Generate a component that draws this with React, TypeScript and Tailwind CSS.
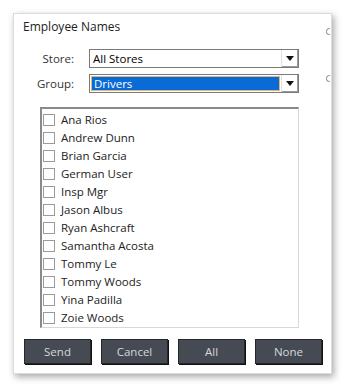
import React from "react";

const names = [
  "Ana Rios",
  "Andrew Dunn",
  "Brian Garcia",
  "German User",
  "Insp Mgr",
  "Jason Albus",
  "Ryan Ashcraft",
  "Samantha Acosta",
  "Tommy Le",
  "Tommy Woods",
  "Yina Padilla",
  "Zoie Woods",
];

function Arrow() {
  return (
    <div className="w-[17px] h-full flex items-center justify-center bg-white border-l border-[#e0e0e0] shadow-[inset_-1px_-1px_0_#9a9a9a]">
      <svg width="8" height="5" viewBox="0 0 8 5">
        <path d="M0 0 H8 L4 5 Z" fill="#111" />
      </svg>
    </div>
  );
}

export default function App() {
  return (
    <div
      className="w-[345px] h-[387px] bg-white relative overflow-hidden"
      style={{ fontFamily: '"Open Sans", "Noto Sans", sans-serif' }}
    >
      <div className="absolute left-[13px] top-[290px] w-[1px] h-[5px] bg-[#8a8a8a]" />
      <div className="ml-[13px] mt-[13px] w-[319px] h-[361px] bg-white border border-[#dcdcdc] shadow-[2px_3px_7px_rgba(0,0,0,0.35)] relative flex flex-col">
        <span className="absolute right-[1px] top-[14px] w-[4px] h-[7px] border border-r-0 border-[#9a9a9a] rounded-l-full" />
        <span className="absolute right-[1px] top-[61px] w-[4px] h-[7px] border border-r-0 border-[#9a9a9a] rounded-l-full" />
        <div className="pl-[9px] pt-[5px] text-[12px] leading-[16px] text-[#222]">
          Employee Names
        </div>
        <div className="mt-[14px] flex items-center h-[19px]">
          <div className="w-[60px] text-right text-[11.5px] text-[#333]">Store:</div>
          <div className="ml-[15px] w-[210px] h-[19px] border border-[#7a7a7a] flex items-stretch">
            <div className="flex-1 pl-[3px] text-[11.5px] leading-[17px] text-black">All Stores</div>
            <Arrow />
          </div>
        </div>
        <div className="mt-[6px] flex items-center h-[19px]">
          <div className="w-[60px] text-right text-[11.5px] text-[#333]">Group:</div>
          <div className="ml-[15px] w-[210px] h-[19px] border border-[#7a7a7a] flex items-stretch">
            <div className="flex-1 p-[1px]">
              <div className="h-full bg-[#0a6ad8] border border-[#e8b86a] pl-[2px] text-[11.5px] leading-[14px] text-white">
                Drivers
              </div>
            </div>
            <Arrow />
          </div>
        </div>
        <div className="mt-[14px] ml-[26px] w-[259px] h-[221px] border-t-2 border-l-2 border-t-[#8a8a8a] border-l-[#8a8a8a] border-r border-b border-r-[#d8d8d8] border-b-[#d8d8d8] pt-[2px]">
          {names.map((n) => (
            <div key={n} className="h-[18px] flex items-center">
              <div className="ml-[1px] w-[12px] h-[12px] border border-[#9a9a9a] bg-white" />
              <span className="ml-[6px] text-[11.5px] text-[#222] leading-[18px]">{n}</span>
            </div>
          ))}
        </div>
        <div className="mt-[11px] ml-[10px] flex gap-[10px]">
          {["Send", "Cancel", "All", "None"].map((b) => (
            <div
              key={b}
              className="w-[67px] h-[25px] bg-[#464b53] border border-[#24272b] shadow-[1px_1px_0_#111] flex items-center justify-center text-[11.5px] text-[#d4d8de]"
            >
              {b}
            </div>
          ))}
        </div>
      </div>
    </div>
  );
}
